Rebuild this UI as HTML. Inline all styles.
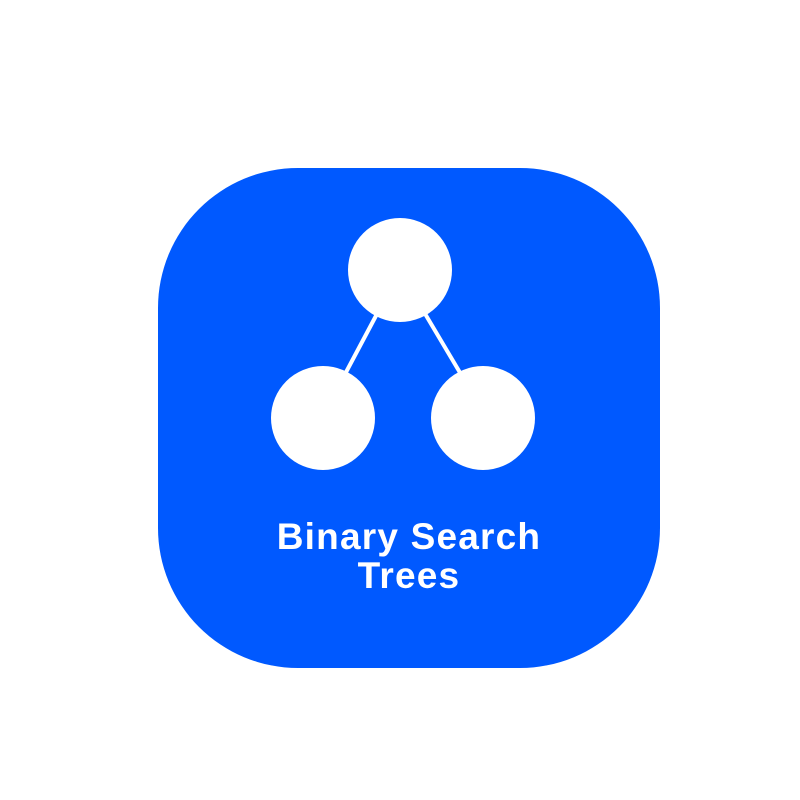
<!DOCTYPE html>
<html><head><style>
html,body{margin:0;padding:0;background:#fff;width:800px;height:800px;overflow:hidden}
.box{position:absolute;left:158px;top:168px;width:502px;height:500px;background:#0059ff;border-radius:140px}
.t{position:absolute;left:0;width:818px;text-align:center;color:#fff;font-family:"Liberation Sans",sans-serif;font-weight:bold;font-size:37px;letter-spacing:1.2px;line-height:39px;top:517px}
</style></head><body>
<div class="box"></div>
<svg width="800" height="800" style="position:absolute;left:0;top:0">
<line x1="378" y1="312" x2="344" y2="376" stroke="#fff" stroke-width="4"/>
<line x1="424" y1="312" x2="462" y2="376" stroke="#fff" stroke-width="4"/>
<circle cx="400" cy="270" r="52" fill="#fff"/>
<circle cx="323" cy="418" r="52" fill="#fff"/>
<circle cx="483" cy="418" r="52" fill="#fff"/>
</svg>
<div class="t">Binary Search<br>Trees</div>
</body></html>
